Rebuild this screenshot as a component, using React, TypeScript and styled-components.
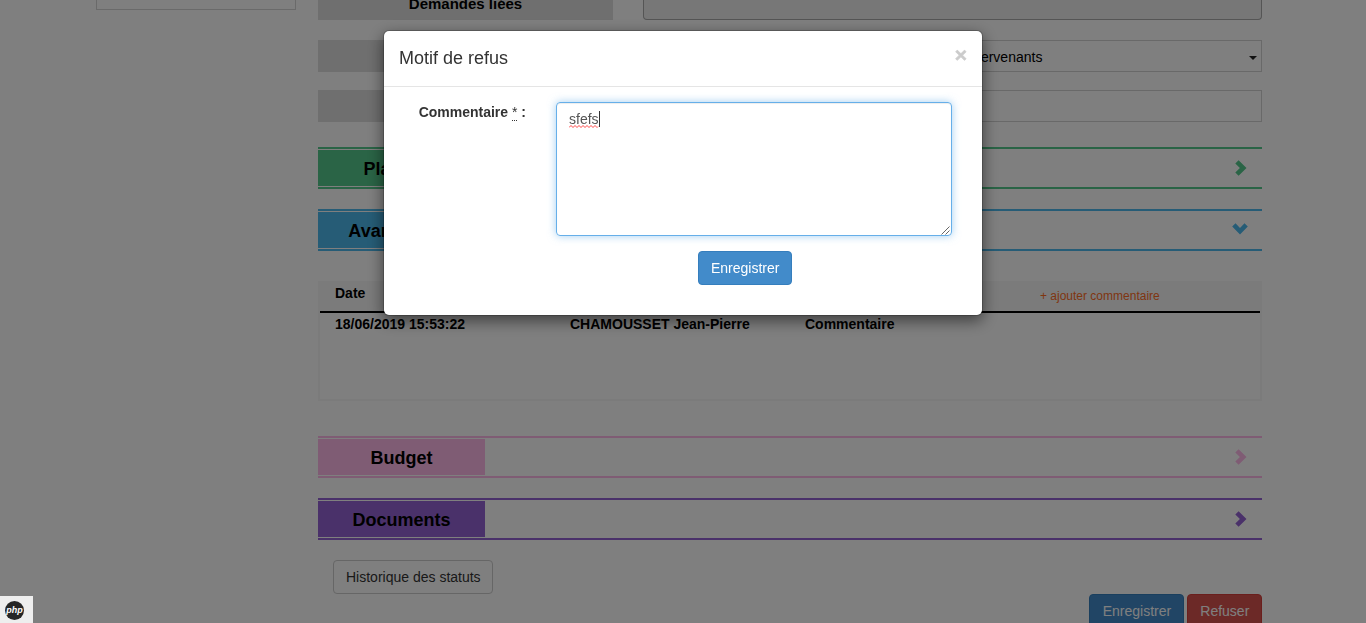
import React from "react";
import styled, { createGlobalStyle } from "styled-components";

const GlobalStyle = createGlobalStyle`
  *, *::before, *::after { box-sizing: border-box; }
  html, body { margin: 0; height: 100%; overflow: hidden; background: #fff; }
  body {
    font-family: "Liberation Sans", Arial, sans-serif;
    font-size: 14px;
    line-height: 20px;
    color: #000;
  }
`;

const Page = styled.div`
  display: flex;
  align-items: flex-start;
  gap: 22px;
  height: 623px;
  padding-left: 96px;
  overflow: hidden;
`;

const SidePanel = styled.aside`
  width: 200px;
  height: 10px;
  border: 1px solid #d4d4d4;
  border-top: 0;
`;

const Main = styled.main`
  width: 944px;
  display: flex;
  flex-direction: column;
`;

const FormRow = styled.div<{ $height: number; $gap: number }>`
  display: grid;
  grid-template-columns: 295px 619px;
  grid-template-rows: 100%;
  column-gap: 30px;
  height: ${(p) => p.$height}px;
  margin-bottom: ${(p) => p.$gap}px;
`;

const FieldLabel = styled.div`
  display: flex;
  align-items: center;
  justify-content: center;
  background: #dedede;
  font-size: 15px;
  font-weight: bold;
`;

const ClippedLabel = styled(FieldLabel)`
  align-items: flex-end;
  padding-bottom: 6px;
`;

const DisabledField = styled.div`
  border: 1px solid #aaa;
  border-top: 0;
  border-radius: 0 0 4px 4px;
  background: #eee;
`;

const Field = styled.div`
  display: flex;
  align-items: center;
  padding: 0 4px;
  border: 1px solid #d2d2d2;
`;

const FieldValue = styled.span`
  flex: 1;
  text-align: center;
  padding: 2px 0 0 8px;
`;

const Caret = styled.i`
  border: 4px solid transparent;
  border-top-color: #222;
  border-bottom: 0;
  margin-top: 3px;
`;

const Section = styled.section<{ $color: string; $gap: number }>`
  display: flex;
  align-items: center;
  justify-content: space-between;
  height: 42px;
  padding: 1px 14px 1px 0;
  border: solid ${(p) => p.$color};
  border-width: 2px 0;
  margin-bottom: ${(p) => p.$gap}px;
  color: ${(p) => p.$color};
`;

const SectionTab = styled.h2<{ $color: string }>`
  width: 167px;
  height: 36px;
  margin: 0;
  font-size: 18px;
  line-height: 38px;
  text-align: center;
  color: #000;
  background: ${(p) => p.$color};
`;

const Chevron = styled.svg<{ $open?: boolean }>`
  width: 16px;
  height: 16px;
  margin-top: ${(p) => (p.$open ? -5 : 0)}px;
  transform: ${(p) => (p.$open ? "rotate(90deg)" : "none")};
  fill: currentColor;
`;

const History = styled.div`
  height: 120px;
  margin-bottom: 35px;
  border: 2px solid #f7f7f7;
`;

const HistoryRow = styled.div<{ $head?: boolean }>`
  display: grid;
  grid-template-columns: repeat(4, 235px);
  height: 30px;
  padding-top: ${(p) => (p.$head ? 0 : 1)}px;
  font-weight: bold;
  background: ${(p) => (p.$head ? "#f7f7f7" : "transparent")};
  border-bottom: ${(p) => (p.$head ? "2px solid #000" : "0")};
`;

const Cell = styled.div`
  padding-left: 15px;
`;

const AddLink = styled.a`
  padding: 3px 0 0 15px;
  font-size: 12px;
  font-weight: normal;
  color: #ff6c1f;
`;

const Button = styled.button<{ $kind: "default" | "primary" | "danger" }>`
  height: 34px;
  padding: 6px 11.7px 6px 12px;
  border: 1px solid
    ${(p) => ({ default: "#ccc", primary: "#357ebd", danger: "#d43f3a" })[p.$kind]};
  border-radius: 4px;
  background: ${(p) => ({ default: "#fff", primary: "#428bca", danger: "#d9534f" })[p.$kind]};
  color: ${(p) => (p.$kind === "default" ? "#333" : "#fff")};
  font: 14px/20px "Liberation Sans", Arial, sans-serif;
  white-space: nowrap;
`;

const StatusBar = styled.div`
  display: flex;
  padding-left: 15px;
`;

const Actions = styled.div`
  display: flex;
  justify-content: flex-end;
  gap: 3px;

  ${Button}:first-child {
    width: 95px;
  }
`;

const Backdrop = styled.div`
  position: fixed;
  inset: 0;
  display: flex;
  align-items: flex-start;
  padding: 30px 0 0 383px;
  background: rgba(0, 0, 0, 0.5);
`;

const Dialog = styled.div`
  width: 600px;
  height: 286px;
  border: 1px solid rgba(0, 0, 0, 0.2);
  border-radius: 6px;
  background: #fff;
  background-clip: padding-box;
  box-shadow: 0 5px 15px rgba(0, 0, 0, 0.5);
  color: #333;
`;

const DialogHeader = styled.header`
  display: flex;
  justify-content: space-between;
  height: 56px;
  padding: 13px 15px 0;
  border-bottom: 1px solid #e5e5e5;
`;

const DialogTitle = styled.h4`
  margin: 0;
  font-size: 18px;
  font-weight: normal;
  line-height: 28px;
`;

const Close = styled.span`
  font-size: 21px;
  font-weight: bold;
  line-height: 21px;
  color: #000;
  opacity: 0.2;
  -webkit-text-stroke: 0.6px #000;
`;

const DialogBody = styled.div`
  display: grid;
  grid-template-columns: 142px 396px;
  column-gap: 30px;
  row-gap: 15px;
  padding-top: 15px;
`;

const InputLabel = styled.label`
  text-align: right;
  font-weight: bold;
`;

const Required = styled.abbr`
  font-weight: normal;
  text-decoration: none;
  border-bottom: 1px dotted #333;
`;

const Comment = styled.div`
  position: relative;
  height: 134px;
  padding: 6px 12px;
  border: 1px solid #66afe9;
  border-radius: 4px;
  box-shadow: inset 0 1px 1px rgba(0, 0, 0, 0.075), 0 0 8px rgba(102, 175, 233, 0.6);
  color: #555;
`;

const Typed = styled.span`
  display: inline-block;
  height: 18px;
  line-height: 20px;
  background: linear-gradient(#333, #333) right bottom / 1px 16px no-repeat;
  padding-right: 1px;
`;

const Squiggle = styled.svg`
  position: absolute;
  left: 12px;
  top: 22px;
`;

const Grip = styled.svg`
  position: absolute;
  right: 1px;
  bottom: 0;
`;

const Submit = styled.div`
  grid-column: 2;
  padding-left: 142px;
`;

const PhpBadge = styled.div`
  position: fixed;
  left: 0;
  bottom: 0;
  width: 33px;
  height: 27px;
  padding: 5px 0 0 5px;
  background: #eee;
`;

const PhpCircle = styled.div`
  display: flex;
  align-items: center;
  justify-content: center;
  width: 19px;
  height: 19px;
  border-radius: 50%;
  background: #262626;
  color: #fff;
  font: italic bold 9px/16px "Liberation Sans", Arial, sans-serif;
  padding-bottom: 2px;
`;

const ChevronIcon = ({ open }: { open?: boolean }) => (
  <Chevron $open={open} viewBox="0 0 16 16">
    <path d="M6.6.2 14.5 8l-7.9 7.8-3.3-3.3L7.9 8 3.3 3.5z" />
  </Chevron>
);

type BarProps = { title: string; color: string; gap: number; open?: boolean };

const Bar = ({ title, color, gap, open }: BarProps) => (
  <Section $color={color} $gap={gap}>
    <SectionTab $color={color}>{title}</SectionTab>
    <ChevronIcon open={open} />
  </Section>
);

export default function App() {
  return (
    <>
      <GlobalStyle />
      <Page>
        <SidePanel />
        <Main>
          <FormRow $height={20} $gap={20}>
            <ClippedLabel>Demandes liées</ClippedLabel>
            <DisabledField />
          </FormRow>
          <FormRow $height={32} $gap={18}>
            <FieldLabel />
            <Field>
              <FieldValue>Sélectionner les intervenants</FieldValue>
              <Caret />
            </Field>
          </FormRow>
          <FormRow $height={32} $gap={25}>
            <FieldLabel />
            <Field />
          </FormRow>
          <Bar title="Planning" color="#54c88c" gap={20} />
          <Bar title="Avancement" color="#4cb9ec" gap={30} open />
          <History>
            <HistoryRow $head>
              <Cell>Date</Cell>
              <Cell />
              <Cell />
              <AddLink>+ ajouter commentaire</AddLink>
            </HistoryRow>
            <HistoryRow>
              <Cell>18/06/2019 15:53:22</Cell>
              <Cell>CHAMOUSSET Jean-Pierre</Cell>
              <Cell>Commentaire</Cell>
            </HistoryRow>
          </History>
          <Bar title="Budget" color="#ffb9e8" gap={20} />
          <Bar title="Documents" color="#9463d4" gap={20} />
          <StatusBar>
            <Button $kind="default">Historique des statuts</Button>
          </StatusBar>
          <Actions>
            <Button $kind="primary">Enregistrer</Button>
            <Button $kind="danger">Refuser</Button>
          </Actions>
        </Main>
      </Page>
      <Backdrop>
        <Dialog role="dialog">
          <DialogHeader>
            <DialogTitle>Motif de refus</DialogTitle>
            <Close>×</Close>
          </DialogHeader>
          <DialogBody>
            <InputLabel>
              Commentaire <Required>*</Required> :
            </InputLabel>
            <Comment>
              <Typed>sfefs</Typed>
              <Squiggle width="31" height="3" viewBox="0 0 31 3">
                <path
                  d="M0 2.5 2 .5l2 2 2-2 2 2 2-2 2 2 2-2 2 2 2-2 2 2 2-2 2 2 2-2 2 2 1-1"
                  fill="none"
                  stroke="#f33"
                  strokeWidth="0.9"
                />
              </Squiggle>
              <Grip width="9" height="9" viewBox="0 0 9 9">
                <path d="M.5 8.5l8-8M4.5 8.5l4-4" stroke="#555" strokeWidth="0.9" fill="none" />
              </Grip>
            </Comment>
            <Submit>
              <Button $kind="primary">Enregistrer</Button>
            </Submit>
          </DialogBody>
        </Dialog>
      </Backdrop>
      <PhpBadge>
        <PhpCircle>php</PhpCircle>
      </PhpBadge>
    </>
  );
}
